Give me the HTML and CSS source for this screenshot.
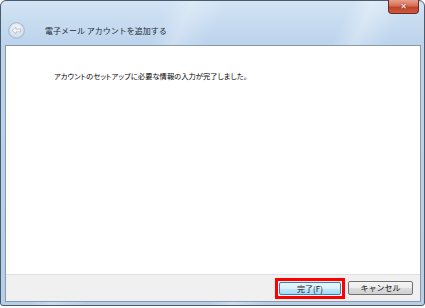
FILE: index.html
```html
<!DOCTYPE html>
<html lang="ja">
<head>
  <meta charset="UTF-8">
  <title>電子メール アカウントを追加する</title>
  <link rel="stylesheet" href="styles.css">
</head>
<body>

<div class="window">
  <div class="caption">
    <button class="close-btn" type="button" aria-label="閉じる">&#x2715;</button>
  </div>
  <div class="nav">
    <span class="back-btn">
      <svg width="17" height="17" viewBox="0 0 17 17">
        <defs>
          <radialGradient id="bg" cx="50%" cy="35%" r="65%">
            <stop offset="0" stop-color="#ffffff" stop-opacity="0.9"/>
            <stop offset="1" stop-color="#c9d9ea" stop-opacity="0.9"/>
          </radialGradient>
        </defs>
        <circle cx="8.5" cy="8.5" r="7.8" fill="url(#bg)" stroke="#a3b2c2" stroke-width="1"/>
        <path d="M4.2 8.5 L8 4.9 L8 7.1 L12.6 7.1 L12.6 9.9 L8 9.9 L8 12.1 Z" fill="#f4f7fa" stroke="#adb9c5" stroke-width="0.8" stroke-linejoin="round"/>
      </svg>
    </span>
    <h1 class="title">電子メール アカウントを追加する</h1>
  </div>

  <div class="panel">
    <div class="panel-body">
      <p class="message">アカウントのセットアップに必要な情報の入力が完了しました。</p>
    </div>
    <div class="panel-footer">
      <span class="highlight">
        <button class="btn btn-default" type="button">完了(F)</button>
      </span>
      <button class="btn" type="button">キャンセル</button>
    </div>
  </div>
</div>

</body>
</html>
```

FILE: styles.css
```css
body {
  margin: 0;
  background-color: #fff;
  font-family: "Noto Sans CJK JP", "Noto Sans", sans-serif;
  width: 425px;
  height: 308px;
  overflow: hidden;
}
.window {
  box-sizing: border-box;
  width: 425px;
  height: 306px;
  border: 1px solid #4a5b6e;
  border-radius: 6px 6px 3px 3px;
  background:
    linear-gradient(115deg, transparent 0 30%, rgba(255,255,255,0.25) 34%, transparent 40% 62%, rgba(255,255,255,0.3) 66%, transparent 72%),
    linear-gradient(180deg, #d3e4f5 0%, #bcd4ec 14%, #b6cfe9 100%);
  display: flex;
  flex-direction: column;
  padding: 0 3px 3px 4px;
}
.caption {
  display: flex;
  justify-content: flex-end;
  height: 14px;
  padding-right: 2px;
}
.close-btn {
  width: 31px;
  height: 14px;
  margin-top: -1px;
  padding: 0;
  border: 1px solid #6d2a21;
  border-top: none;
  border-radius: 0 0 4px 4px;
  background: linear-gradient(180deg, #e7a08c 0%, #d46f55 45%, #c2432a 55%, #cc5b3f 100%);
  color: #fff;
  font-family: "DejaVu Sans", sans-serif;
  font-size: 8px;
  font-weight: bold;
  line-height: 12px;
  text-shadow: 0 0 2px #5a1a10;
}
.nav {
  display: flex;
  align-items: center;
  height: 30px;
  padding-left: 3px;
}
.back-btn {
  display: flex;
  width: 17px;
  height: 17px;
}
.title {
  margin: 0 0 0 20px;
  font-size: 8px;
  font-weight: normal;
  color: #1e2a36;
}
.panel {
  flex: 1;
  display: flex;
  flex-direction: column;
  border: 1px solid #8a99a9;
  background-color: #fff;
}
.panel-body {
  flex: 1;
}
.message {
  margin: 25px 0 0 48px;
  font-size: 7.3px;
  font-feature-settings: "palt";
  color: #000;
}
.panel-footer {
  display: flex;
  justify-content: flex-end;
  align-items: center;
  gap: 3px;
  height: 26px;
  padding-right: 7px;
  background-color: #f0f0f0;
  border-top: 1px solid #dfdfdf;
}
.highlight {
  display: flex;
  border: 3px solid #ff0000;
  padding: 1px;
}
.btn {
  box-sizing: border-box;
  width: 65px;
  height: 14px;
  padding: 0;
  border: 1px solid #707070;
  border-radius: 2px;
  background: linear-gradient(180deg, #f4f4f4 0%, #ececec 50%, #dcdcdc 51%, #d0d0d0 100%);
  font-family: "Noto Sans CJK JP", sans-serif;
  font-size: 8px;
  line-height: 12px;
  color: #111;
}
.btn-default {
  width: 62px;
  height: 13px;
  border-color: #3c7fb1;
  background: linear-gradient(180deg, #eaf6fd 0%, #d9f0fc 50%, #bee6fd 51%, #a7d9f5 100%);
}
```
